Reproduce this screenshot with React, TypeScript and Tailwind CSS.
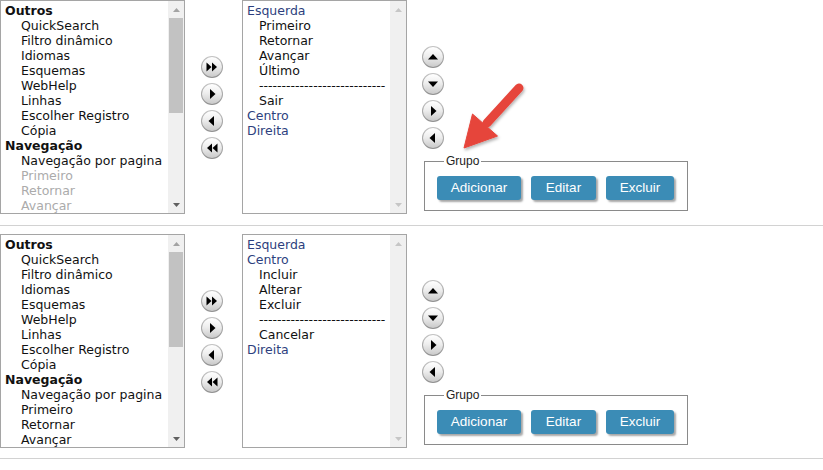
import React from "react";

type Item = { t: string; k: "g" | "i" | "d" | "b" | "s" };

const LIST1_TOP: Item[] = [
  { t: "Outros", k: "g" },
  { t: "QuickSearch", k: "i" },
  { t: "Filtro dinâmico", k: "i" },
  { t: "Idiomas", k: "i" },
  { t: "Esquemas", k: "i" },
  { t: "WebHelp", k: "i" },
  { t: "Linhas", k: "i" },
  { t: "Escolher Registro", k: "i" },
  { t: "Cópia", k: "i" },
  { t: "Navegação", k: "g" },
  { t: "Navegação por pagina", k: "i" },
  { t: "Primeiro", k: "d" },
  { t: "Retornar", k: "d" },
  { t: "Avançar", k: "d" },
];

const LIST1_BOTTOM: Item[] = LIST1_TOP.map((x) => (x.k === "d" ? { ...x, k: "i" } : x));

const DASH = "----------------------------";

const LIST2_TOP: Item[] = [
  { t: "Esquerda", k: "b" },
  { t: "Primeiro", k: "i" },
  { t: "Retornar", k: "i" },
  { t: "Avançar", k: "i" },
  { t: "Último", k: "i" },
  { t: DASH, k: "s" },
  { t: "Sair", k: "i" },
  { t: "Centro", k: "b" },
  { t: "Direita", k: "b" },
];

const LIST2_BOTTOM: Item[] = [
  { t: "Esquerda", k: "b" },
  { t: "Centro", k: "b" },
  { t: "Incluir", k: "i" },
  { t: "Alterar", k: "i" },
  { t: "Excluir", k: "i" },
  { t: DASH, k: "s" },
  { t: "Cancelar", k: "i" },
  { t: "Direita", k: "b" },
];

function ScrollArrow({ up, color }: { up: boolean; color: string }) {
  return (
    <div className="h-[17px] flex items-center justify-center">
      <svg width="7" height="4" viewBox="0 0 7 4">
        {up ? <polygon points="0,4 7,4 3.5,0" fill={color} /> : <polygon points="0,0 7,0 3.5,4" fill={color} />}
      </svg>
    </div>
  );
}

function ListBox({ items, indent, scroll }: { items: Item[]; indent: string; scroll: boolean }) {
  return (
    <div className="flex h-[214px] border border-[#a5a5a5] bg-white shrink-0">
      <div className="flex-1 pt-[2px] pl-[4px] overflow-hidden font-['DejaVu_Sans',sans-serif] text-[12.5px] leading-[15px] whitespace-nowrap">
        {items.map((it, i) => {
          if (it.k === "g")
            return (
              <div key={i} className="font-bold text-[#111]">
                {it.t}
              </div>
            );
          if (it.k === "b")
            return (
              <div key={i} className="text-[#2d3f7e]">
                {it.t}
              </div>
            );
          if (it.k === "s")
            return (
              <div key={i} className={`${indent} text-[#111]`}>
                {it.t}
              </div>
            );
          return (
            <div key={i} className={`${indent} ${it.k === "d" ? "text-[#ababab]" : "text-[#111]"}`}>
              {it.t}
            </div>
          );
        })}
      </div>
      <div className="w-[16px] bg-[#f0f0f0] flex flex-col">
        <ScrollArrow up={true} color={scroll ? "#a3a3a3" : "#c6c6c6"} />
        <div className="flex-1 px-[1px] pb-[82px]">
          {scroll && <div className="h-[95px] bg-[#c2c2c2]" />}
        </div>
        <ScrollArrow up={false} color={scroll ? "#606060" : "#c6c6c6"} />
      </div>
    </div>
  );
}

type Glyph = "ff" | "r" | "l" | "bb" | "u" | "d";

function Round({ g }: { g: Glyph }) {
  let shapes: React.ReactNode = null;
  if (g === "r") shapes = <polygon points="9,6 14.5,11 9,16" fill="#000" />;
  if (g === "l") shapes = <polygon points="13,6 7.5,11 13,16" fill="#000" />;
  if (g === "ff")
    shapes = (
      <>
        <polygon points="5.5,6.5 10.5,11 5.5,15.5" fill="#000" />
        <polygon points="11,6.5 16,11 11,15.5" fill="#000" />
      </>
    );
  if (g === "bb")
    shapes = (
      <>
        <polygon points="11,6.5 6,11 11,15.5" fill="#000" />
        <polygon points="16.5,6.5 11.5,11 16.5,15.5" fill="#000" />
      </>
    );
  if (g === "u") shapes = <polygon points="6,13.5 16,13.5 11,8" fill="#000" />;
  if (g === "d") shapes = <polygon points="6,8.5 16,8.5 11,14" fill="#000" />;
  return (
    <svg width="22" height="22" viewBox="0 0 22 22" className="block">
      <defs>
        <linearGradient id="rg" x1="0" y1="0" x2="0" y2="1">
          <stop offset="0" stopColor="#ffffff" />
          <stop offset="0.45" stopColor="#eeeeee" />
          <stop offset="1" stopColor="#c9c9c9" />
        </linearGradient>
        <linearGradient id="rb" x1="0" y1="0" x2="0" y2="1">
          <stop offset="0" stopColor="#c4c4c4" />
          <stop offset="1" stopColor="#8e8e8e" />
        </linearGradient>
      </defs>
      <circle cx="11" cy="11" r="11" fill="url(#rb)" />
      <circle cx="11" cy="11" r="10" fill="url(#rg)" />
      {shapes}
    </svg>
  );
}

function BlueBtn({ label, w }: { label: string; w: string }) {
  return (
    <div
      className={`${w} h-[24px] rounded-[3px] bg-[#3b8cb6] text-white flex items-center justify-center font-['Liberation_Sans',Arial,sans-serif] text-[13.5px] shadow-[2px_2px_2px_rgba(0,0,0,0.35)]`}
    >
      {label}
    </div>
  );
}

function Section({ list1, list2, top }: { list1: Item[]; list2: Item[]; top: boolean }) {
  return (
    <div className={`flex border-b border-[#d2d2d2] ${top ? "pb-[11px]" : "pt-[8px] pb-[10px]"}`}>
      <div className="w-[185px]">
        <ListBox items={list1} indent="pl-[16px]" scroll={true} />
      </div>
      <div className="ml-[16px] mt-[56px] flex flex-col gap-[5px]">
        <Round g="ff" />
        <Round g="r" />
        <Round g="l" />
        <Round g="bb" />
      </div>
      <div className="ml-[19px] w-[165px]">
        <ListBox items={list2} indent="pl-[12px]" scroll={false} />
      </div>
      <div className="ml-[15px] flex flex-col">
        <div className="mt-[46px] flex flex-col gap-[5px]">
          <Round g="u" />
          <Round g="d" />
          <Round g="r" />
          <Round g="l" />
        </div>
        <fieldset className="mt-[5px] ml-[2px] w-[264px] border border-[#8a8a8a] px-[12px] pb-[10px]">
          <legend className="ml-[7px] px-[2px] font-['Liberation_Sans',Arial,sans-serif] text-[12px] leading-[14px] text-[#222]">
            Grupo
          </legend>
          <div className="mt-[8px] flex gap-[10px]">
            <BlueBtn label="Adicionar" w="w-[84px]" />
            <BlueBtn label="Editar" w="w-[65px]" />
            <BlueBtn label="Excluir" w="w-[68px]" />
          </div>
        </fieldset>
      </div>
    </div>
  );
}

export default function App() {
  return (
    <div className="relative w-[823px] h-[470px] bg-white overflow-hidden">
      <Section list1={LIST1_TOP} list2={LIST2_TOP} top={true} />
      <Section list1={LIST1_BOTTOM} list2={LIST2_BOTTOM} top={false} />
      <svg className="absolute left-0 top-0 pointer-events-none" width="823" height="470" viewBox="0 0 823 470">
        <defs>
          <filter id="sh" x="-20%" y="-20%" width="140%" height="140%">
            <feDropShadow dx="1" dy="2" stdDeviation="1.5" floodColor="#000" floodOpacity="0.3" />
          </filter>
        </defs>
        <g filter="url(#sh)" fill="#e6453b" stroke="#e6453b">
          <line x1="519" y1="88" x2="487" y2="123" strokeWidth="9" strokeLinecap="round" />
          <polygon points="464,148 472.5,114 497.5,136" strokeWidth="1" strokeLinejoin="round" />
        </g>
      </svg>
    </div>
  );
}
